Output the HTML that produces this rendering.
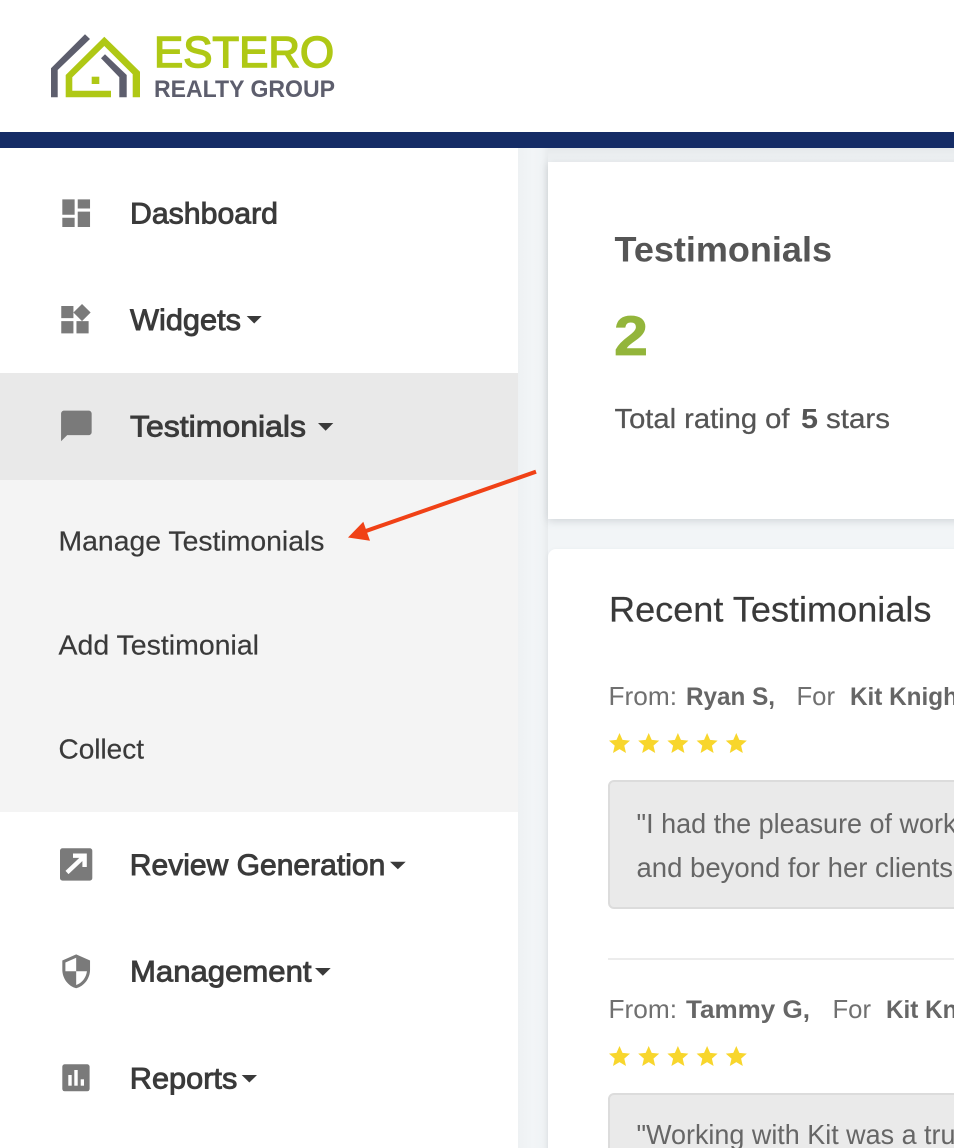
<!DOCTYPE html>
<html><head><meta charset="utf-8"><style>
html,body{margin:0;padding:0;width:954px;height:1148px;overflow:hidden;background:#f2f5f7}
#w{position:relative;width:954px;height:1148px;overflow:hidden;background:#f2f5f7}
.a{position:absolute}
svg{position:absolute;left:0;top:0}
text{font-family:"Liberation Sans",sans-serif}
.nav{font-size:30px;fill:#3a3a3a;stroke:#3a3a3a;stroke-width:.9px}
.sub{font-size:27.9px;fill:#3a3a3a;stroke:#3a3a3a;stroke-width:.2px}
.os{font-size:25.6px;fill:#707070}
.osb{font-size:24.6px;fill:#666;font-weight:700}
.q{font-size:27.6px;fill:#666}
</style></head><body><div id="w">
<div class="a" style="left:0;top:0;width:954px;height:132px;background:#fff"></div>
<div class="a" style="left:518px;top:148px;width:436px;height:14px;background:linear-gradient(#e6e9eb,#f0f3f5)"></div>
<div class="a" style="left:518px;top:148px;width:30px;height:1000px;background:linear-gradient(90deg,#eef1f3,#f2f5f7 50%,#f0f3f5 80%,#e8ebed)"></div>
<div class="a" style="left:0;top:148px;width:518px;height:1000px;background:#fff"></div>
<div class="a" style="left:0;top:373px;width:518px;height:107px;background:#e9e9e9"></div>
<div class="a" style="left:0;top:480px;width:518px;height:332px;background:#f4f4f4"></div>
<div class="a" style="left:548px;top:162px;width:420px;height:357px;background:#fff;box-shadow:0 2px 8px rgba(90,100,110,.22)"></div>
<div class="a" style="left:548px;top:549px;width:420px;height:620px;background:#fff;border-radius:8px;box-shadow:0 1px 4px rgba(90,100,110,.08)"></div>
<div class="a" style="left:0;top:132px;width:954px;height:16px;background:#152c66"></div>
<div class="a" style="left:608px;top:780px;width:380px;height:125px;background:#eaeaea;border:2px solid #dcdcdc;border-radius:6px"></div>
<div class="a" style="left:608px;top:958px;width:346px;height:2px;background:#ececec"></div>
<div class="a" style="left:608px;top:1093px;width:380px;height:100px;background:#eaeaea;border:2px solid #dcdcdc;border-radius:6px"></div>

<svg width="954" height="1148" viewBox="0 0 954 1148">
<!-- logo -->
<path d="M51 68.300 85 34.300 90 39 57.700 70V97.300H51z" fill="#5d5e6d"/>
<path d="M65.700 97.300V75L104.300 36.700 140 71.700V97.300H132.700V74.300L104.300 46 72.300 77.300V90.700H111V97.300z" fill="#afc815"/>
<path d="M101 58.300 105 54.300 126.700 75V97.300H119.300V77.300z" fill="#5d5e6d"/>
<rect x="91.700" y="76.700" width="7.600" height="7.300" fill="#afc815"/>
<text x="154" y="66.800" font-size="44" fill="#afc815" stroke="#afc815" stroke-width="1.500" textLength="180" lengthAdjust="spacingAndGlyphs">ESTERO</text>
<text x="154" y="97" font-size="24" font-weight="700" fill="#5d5e6d" textLength="181" lengthAdjust="spacingAndGlyphs">REALTY GROUP</text>

<!-- nav icons -->
<g fill="#7a7a7a">
<path transform="translate(57.700 194.700) scale(1.54)" d="M3 13h8V3H3v10zm0 8h8v-6H3v6zm10 0h8V11h-8v10zm0-18v6h8V3h-8z"/>
<path transform="translate(56.700 301.400) scale(1.52)" d="M13 13v8h8v-8h-8zM3 21h8v-8H3v8zM3 3v8h8V3H3zm13.660-1.310L11 7.340 16.660 13l5.660-5.660-5.660-5.650z"/>
<path transform="translate(58 407.600) scale(1.53)" d="M20 2H4c-1.100 0-1.990.9-1.990 2L2 22l4-4h14c1.100 0 2-.9 2-2V4c0-1.100-.9-2-2-2z"/>
<rect x="60" y="848.300" width="32.300" height="32.300" rx="2.500"/>
<path transform="translate(57.700 952.800) scale(1.54)" d="M12 1L3 5v6c0 5.550 3.840 10.740 9 12 5.160-1.260 9-6.450 9-12V5l-9-4zm0 10.990h7c-.53 4.120-3.280 7.790-7 8.940V12H5V6.300l7-3.110v8.800z"/>
<rect x="62.300" y="1064.300" width="27.300" height="27" rx="2.500"/>
</g>
<path d="M67 872.500 84 856.500M73 855.700H84.600V867" fill="none" stroke="#fff" stroke-width="4.400"/>
<g fill="#fff">
<rect x="68.300" y="1075" width="3.400" height="10.700"/>
<rect x="74.300" y="1070" width="3.400" height="15.700"/>
<rect x="80.700" y="1079.300" width="3.300" height="6.400"/>
</g>

<!-- nav text -->
<text class="nav" x="130" y="223.300" textLength="148" lengthAdjust="spacingAndGlyphs">Dashboard</text>
<text class="nav" x="130" y="330" textLength="111" lengthAdjust="spacingAndGlyphs">Widgets</text>
<text class="nav" x="130" y="436.700" textLength="176" lengthAdjust="spacingAndGlyphs">Testimonials</text>
<text class="nav" x="129.800" y="875" textLength="255.500" lengthAdjust="spacingAndGlyphs">Review Generation</text>
<text class="nav" x="130" y="981.700" textLength="181.500" lengthAdjust="spacingAndGlyphs">Management</text>
<text class="nav" x="129.800" y="1088.700" textLength="107.500" lengthAdjust="spacingAndGlyphs">Reports</text>
<g fill="#3a3a3a">
<path d="M246.700 316h15l-7.500 7.500z"/>
<path d="M318 423h15.300l-7.650 7.700z"/>
<path d="M390 861.700h15.700l-7.850 7.500z"/>
<path d="M315 968h15.700l-7.850 7.700z"/>
<path d="M241.700 1075H257l-7.650 7.500z"/>
</g>
<text class="sub" x="58.500" y="550.700" textLength="266" lengthAdjust="spacingAndGlyphs">Manage Testimonials</text>
<text class="sub" x="58.500" y="654.500" textLength="200.500" lengthAdjust="spacingAndGlyphs">Add Testimonial</text>
<text class="sub" x="58.500" y="758.500" textLength="85.500" lengthAdjust="spacingAndGlyphs">Collect</text>

<!-- card 1 -->
<text x="614.500" y="261.700" font-size="35.500" font-weight="700" fill="#555" textLength="217.500" lengthAdjust="spacingAndGlyphs">Testimonials</text>
<text x="614" y="355" font-size="56" font-weight="700" fill="#93b53b" stroke="#93b53b" stroke-width=".8" textLength="34" lengthAdjust="spacingAndGlyphs">2</text>
<text x="614.500" y="428" font-size="27.500" fill="#555" stroke="#555" stroke-width=".25" textLength="175" lengthAdjust="spacingAndGlyphs">Total rating of</text>
<text x="801" y="428" font-size="27.500" font-weight="700" fill="#555" textLength="17" lengthAdjust="spacingAndGlyphs">5</text>
<text x="826" y="428" font-size="27.500" fill="#555" stroke="#555" stroke-width=".25" textLength="64" lengthAdjust="spacingAndGlyphs">stars</text>

<!-- card 2 -->
<text x="609" y="621.700" font-size="35.500" fill="#3a3a3a" stroke="#3a3a3a" stroke-width=".2" textLength="322.500" lengthAdjust="spacingAndGlyphs">Recent Testimonials</text>
<text class="os" x="608.500" y="705" textLength="68.500" lengthAdjust="spacingAndGlyphs">From:</text>
<text class="osb" x="686" y="705" textLength="89" lengthAdjust="spacingAndGlyphs">Ryan S,</text>
<text class="os" x="796.500" y="705" textLength="38.500" lengthAdjust="spacingAndGlyphs">For</text>
<text class="osb" x="850" y="705" textLength="116" lengthAdjust="spacingAndGlyphs">Kit Knight</text>
<text class="q" x="636.500" y="833" textLength="320" lengthAdjust="spacingAndGlyphs">"I had the pleasure of work</text>
<text class="q" x="636.500" y="877" textLength="316.500" lengthAdjust="spacingAndGlyphs">and beyond for her clients</text>
<text class="os" x="608.500" y="1018" textLength="68.500" lengthAdjust="spacingAndGlyphs">From:</text>
<text class="osb" x="686" y="1018" textLength="124" lengthAdjust="spacingAndGlyphs">Tammy G,</text>
<text class="os" x="832.500" y="1018" textLength="38.500" lengthAdjust="spacingAndGlyphs">For</text>
<text class="osb" x="886" y="1018" textLength="116" lengthAdjust="spacingAndGlyphs">Kit Knight</text>
<text class="q" x="636.500" y="1144" textLength="319" lengthAdjust="spacingAndGlyphs">"Working with Kit was a tru</text>

<!-- stars -->
<defs><path id="s" d="M10.500 0l3 6.900 7.500.7-5.700 5 1.700 7.400-6.500-3.900L4 20l1.700-7.400L0 7.600l7.500-.7z" fill="#f8d62c"/></defs>
<use href="#s" x="609" y="733"/><use href="#s" x="638.200" y="733"/><use href="#s" x="667.400" y="733"/><use href="#s" x="696.600" y="733"/><use href="#s" x="725.800" y="733"/>
<use href="#s" x="609" y="1046"/><use href="#s" x="638.200" y="1046"/><use href="#s" x="667.400" y="1046"/><use href="#s" x="696.600" y="1046"/><use href="#s" x="725.800" y="1046"/>

<!-- arrow -->
<path d="M536 471.700 364 531.700" stroke="#f04116" stroke-width="4" fill="none"/>
<path d="M348 537.500 363.300 521.700 370 540.700z" fill="#f04116"/>
</svg>
</div></body></html>
